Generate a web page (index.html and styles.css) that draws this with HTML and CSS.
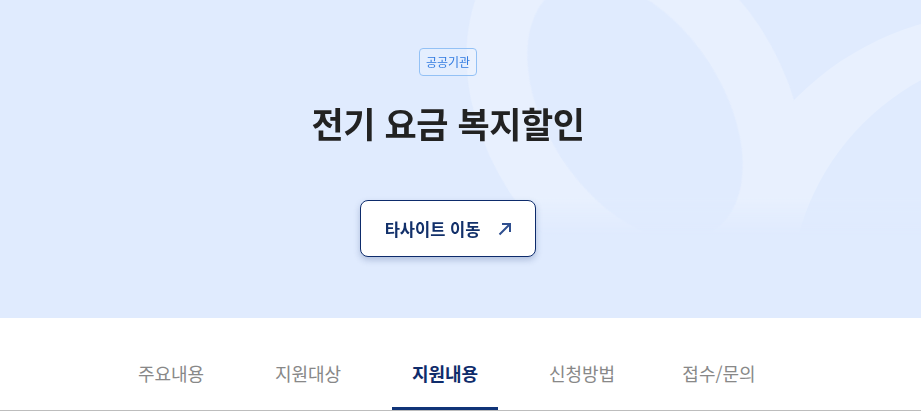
FILE: index.html
```html
<!DOCTYPE html>
<html lang="ko">

<head>
    <meta charset="UTF-8">
    <meta name="viewport" content="width=device-width, initial-scale=1.0">
    <title>전기 요금 복지할인</title>
    <link rel="stylesheet" href="styles.css">
</head>

<body>

    <section class="hero">
        <svg class="hero-deco" width="921" height="318" viewBox="0 0 921 318" aria-hidden="true">
            <defs>
                <linearGradient id="fade" x1="0" y1="0" x2="0" y2="1">
                    <stop offset="0.62" stop-color="#fff" />
                    <stop offset="0.74" stop-color="#000" />
                </linearGradient>
                <mask id="fadeMask">
                    <rect width="921" height="318" fill="url(#fade)" />
                </mask>
            </defs>
            <g mask="url(#fadeMask)">
                <ellipse cx="635" cy="110" rx="206" ry="150" transform="rotate(57 635 110)" fill="#e8f0fe" />
                <circle cx="1000" cy="300" r="287" fill="#e8f0fe" />
                <ellipse cx="635" cy="110" rx="144" ry="88" transform="rotate(57 635 110)" fill="#e0ebfe" />
                <circle cx="1040" cy="300" r="250" fill="#e0ebfe" />
            </g>
        </svg>

        <div class="hero-inner">
            <span class="badge">공공기관</span>
            <h1 class="hero-title">전기 요금 복지할인</h1>
            <a class="site-btn" href="#">
                타사이트 이동
                <svg width="16" height="16" viewBox="0 0 16 16" aria-hidden="true">
                    <path d="M2.5 13.5 L13 3 M5 3 H13 V11" fill="none" stroke="#2f4f8f" stroke-width="2" />
                </svg>
            </a>
        </div>
    </section>

    <nav class="tabs">
        <ul class="tab-list">
            <li class="tab">주요내용</li>
            <li class="tab">지원대상</li>
            <li class="tab tab-active">지원내용</li>
            <li class="tab">신청방법</li>
            <li class="tab">접수/문의</li>
        </ul>
    </nav>

</body>

</html>
```

FILE: styles.css
```css
body {
    margin: 0;
    padding: 0;
    font-family: "Noto Sans CJK KR", "Noto Sans", sans-serif;
    background-color: #fff;
    color: #222;
}

.hero {
    position: relative;
    height: 318px;
    overflow: hidden;
    background-color: #e0ebfe;
}

.hero-deco {
    position: absolute;
    top: 0;
    left: 0;
}

.hero-inner {
    position: relative;
    display: flex;
    flex-direction: column;
    align-items: center;
    padding: 48px 25px 0 0;
}

.badge {
    box-sizing: border-box;
    height: 28px;
    padding: 0 6px;
    font-size: 12px;
    line-height: 26px;
    color: #2f7ae0;
    border: 1px solid #93c1f5;
    border-radius: 4px;
    background-color: rgba(255, 255, 255, 0.15);
}

.hero-title {
    margin: 27px 0 0;
    font-size: 35px;
    line-height: 40px;
    font-weight: 700;
    letter-spacing: -0.4px;
    color: #222;
}

.site-btn {
    box-sizing: border-box;
    display: flex;
    align-items: center;
    gap: 17px;
    height: 57px;
    margin-top: 57px;
    padding: 0 22px 0 24px;
    font-size: 16.5px;
    font-weight: 700;
    color: #12306a;
    text-decoration: none;
    background-color: #fff;
    border: 1px solid #0d2b6b;
    border-radius: 8px;
    box-shadow: 0 3px 6px rgba(30, 60, 120, 0.25);
}

.tabs {
    border-bottom: 1px solid #bdbdbd;
}

.tab-list {
    display: flex;
    justify-content: center;
    gap: 31px;
    margin: 0;
    padding: 0 31px 0 0;
    list-style: none;
}

.tab {
    width: 106px;
    padding: 42px 0 21px;
    font-size: 18px;
    line-height: 26px;
    text-align: center;
    color: #888;
    border-bottom: 3px solid transparent;
}

.tab-active {
    font-weight: 700;
    color: #0f2c6b;
    border-bottom-color: #103478;
}
```
